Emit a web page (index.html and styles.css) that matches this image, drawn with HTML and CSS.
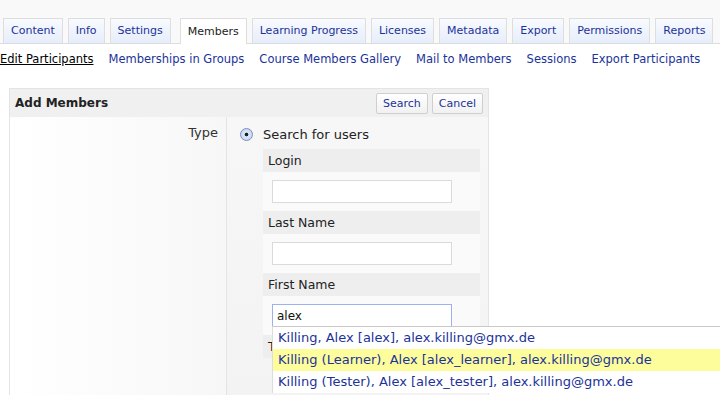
FILE: index.html
```html
<!DOCTYPE html>
<html lang="en">
<head>
  <meta charset="UTF-8" />
  <title>Members</title>
  <link rel="stylesheet" href="styles.css">
</head>
<body>
  <div class="tabs-bar">
    <div class="tabs">
      <a class="tab">Content</a>
      <a class="tab">Info</a>
      <a class="tab">Settings</a>
      <a class="tab active">Members</a>
      <a class="tab">Learning Progress</a>
      <a class="tab">Licenses</a>
      <a class="tab">Metadata</a>
      <a class="tab">Export</a>
      <a class="tab">Permissions</a>
      <a class="tab">Reports</a>
    </div>
  </div>

  <div class="subtabs">
    <a class="subtab current">Edit Participants</a>
    <a class="subtab">Memberships in Groups</a>
    <a class="subtab">Course Members Gallery</a>
    <a class="subtab">Mail to Members</a>
    <a class="subtab">Sessions</a>
    <a class="subtab">Export Participants</a>
  </div>

  <div class="panel">
    <div class="panel-head">
      <h2>Add Members</h2>
      <div class="actions">
        <button class="btn">Search</button>
        <button class="btn">Cancel</button>
      </div>
    </div>
    <div class="panel-body">
      <div class="label-col">Type</div>
      <div class="field-col">
        <div class="radio-row">
          <span class="radio"></span>
          <span>Search for users</span>
        </div>
        <div class="subform">
          <div class="sub-label">Login</div>
          <div class="sub-field"><input class="text-input" type="text"></div>
          <div class="sub-label">Last Name</div>
          <div class="sub-field"><input class="text-input" type="text"></div>
          <div class="sub-label">First Name</div>
          <div class="sub-field autocomplete">
            <input class="text-input focused" type="text" value="alex">
            <ul class="suggestions">
              <li>Killing, Alex [alex], alex.killing@gmx.de</li>
              <li class="selected">Killing (Learner), Alex [alex_learner], alex.killing@gmx.de</li>
              <li>Killing (Tester), Alex [alex_tester], alex.killing@gmx.de</li>
            </ul>
          </div>
          <div class="sub-label">Title</div>
        </div>
      </div>
    </div>
  </div>
</body>
</html>
```

FILE: styles.css
```css
* {
  margin: 0;
  padding: 0;
  box-sizing: border-box;
}

body {
  width: 720px;
  height: 396px;
  overflow: hidden;
  background-color: #fff;
  font-family: "DejaVu Sans", Verdana, sans-serif;
  font-size: 12px;
  color: #222;
}

.tabs-bar {
  background-color: #f9f9f9;
  padding-top: 18px;
  border-bottom: 1px solid #dcdcdc;
}

.tabs {
  display: flex;
  align-items: flex-end;
  gap: 5px;
  padding-left: 3px;
  white-space: nowrap;
}

.tab {
  height: 25px;
  line-height: 24px;
  padding: 0 7px;
  border: 1px solid #dedede;
  border-bottom: none;
  background: linear-gradient(#f8faff, #e6edfb);
  color: #1b3399;
  font-size: 11px;
  flex-shrink: 0;
}

.tab.active {
  height: 26px;
  line-height: 25px;
  margin: 0 0 -1px 4px;
  background: #fff;
  color: #222;
}

.subtabs {
  display: flex;
  gap: 15px;
  height: 30px;
  align-items: center;
  white-space: nowrap;
}

.subtab {
  color: #1b3399;
  font-size: 11.5px;
}

.subtab.current {
  color: #000;
  text-decoration: underline;
}

.panel {
  margin: 14px 0 0 9px;
  width: 480px;
  border: 1px solid #e4e4e4;
  border-bottom: none;
}

.panel-head {
  display: flex;
  justify-content: space-between;
  align-items: center;
  height: 28px;
  padding: 0 5px 0 5px;
  background-color: #f0f0f0;
}

.panel-head h2 {
  font-size: 12px;
  font-weight: bold;
  color: #222;
}

.actions {
  display: flex;
  gap: 4px;
}

.btn {
  height: 21px;
  padding: 0 6px;
  border: 1px solid #cfcfcf;
  border-radius: 2px;
  background: linear-gradient(#fff, #f1f1f1);
  color: #1b3399;
  font-family: inherit;
  font-size: 11px;
}

.panel-body {
  display: grid;
  grid-template-columns: 217px 1fr;
  height: 278px;
}

.label-col {
  padding: 8px 8px 0 0;
  text-align: right;
  font-size: 13px;
  color: #333;
  background: linear-gradient(to right, #fff, #f7f7f7);
  border-right: 1px solid #e4e4e4;
}

.field-col {
  padding: 8px 8px 0 36px;
  background: linear-gradient(#f7f7f7, #f3f3f3);
}

.radio-row {
  display: flex;
  align-items: center;
  gap: 10px;
  margin-left: -23px;
  height: 18px;
  font-size: 13px;
  color: #222;
}

.radio {
  width: 13px;
  height: 13px;
  border-radius: 50%;
  border: 1px solid #7c8fb5;
  background: radial-gradient(circle, #222 0 1.6px, #dce8fb 2.2px, #b9cdef 100%);
}

.subform {
  margin-top: 6px;
  background-color: #fafafa;
}

.sub-label {
  height: 23px;
  line-height: 23px;
  padding-left: 5px;
  background-color: #eeeeee;
  font-size: 12.5px;
  color: #222;
}

.sub-field {
  height: 39px;
  padding: 8px 0 0 9px;
}

.text-input {
  display: block;
  width: 180px;
  height: 23px;
  border: 1px solid #dadada;
  background-color: #fff;
  padding: 0 4px;
  font-family: inherit;
  font-size: 12px;
  color: #111;
  outline: none;
}

.text-input.focused {
  border-color: #9cb2f0;
}

.autocomplete {
  position: relative;
}

.suggestions {
  position: absolute;
  left: 9px;
  top: 30px;
  width: 448px;
  list-style: none;
  background-color: #fff;
  border-top: 1px solid #c9c9c9;
  border-left: 1px solid #dcdcdc;
  z-index: 2;
}

.suggestions li {
  height: 22px;
  line-height: 22px;
  padding-left: 5px;
  color: #1b3399;
  font-size: 13px;
  white-space: nowrap;
}

.suggestions li.selected {
  background-color: #fdfd9c;
}
```
